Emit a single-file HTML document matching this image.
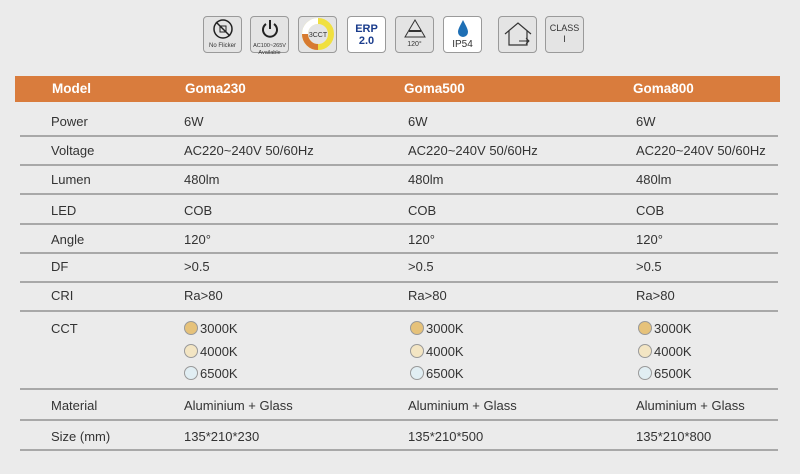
<!DOCTYPE html>
<html><head><meta charset="utf-8"><style>
*{margin:0;padding:0;box-sizing:border-box}
body{width:800px;height:474px;background:#ebebeb;font-family:"Liberation Sans",sans-serif;position:relative;overflow:hidden;color:#333}
.ic{position:absolute;top:16px;width:39px;height:37px;border:1.5px solid #9a9a9a;border-radius:4px;background:#e4e4e4;font-size:6px;text-align:center;color:#333}
.hdr{position:absolute;left:15px;top:76px;width:765px;height:26px;background:#d97c3d;color:#fff;font-weight:bold;font-size:13.5px}
.hdr span{position:absolute;top:5px}
.line{position:absolute;left:20px;width:758px;height:2px;background:#a8a8a8}
.t{position:absolute;font-size:13px;color:#333;white-space:nowrap}
.dot{display:inline-block;width:14px;height:14px;border-radius:50%;border:1px solid #999;vertical-align:-2px;margin-right:2px}
</style></head><body>
<div class="ic" style="left:203px"><svg width="36" height="26" viewBox="0 0 36 26"><circle cx="18" cy="12" r="9" fill="none" stroke="#222" stroke-width="1.5"/><line x1="11" y1="5" x2="25" y2="19" stroke="#222" stroke-width="1.5"/><path d="M15 9h6v6h-6z" fill="none" stroke="#222"/></svg><div style="margin-top:-2px">No Flicker</div></div>
<div class="ic" style="left:250px"><svg width="36" height="24" viewBox="0 0 36 24"><path d="M14 7a7 7 0 1 0 8 0" fill="none" stroke="#222" stroke-width="2"/><line x1="18" y1="3" x2="18" y2="12" stroke="#222" stroke-width="2"/></svg><div style="font-size:5.5px;line-height:7px">AC100~265V<br>Available</div></div>
<div class="ic" style="left:298px"><svg width="36" height="34" viewBox="0 0 36 34"><circle cx="18" cy="17" r="13" fill="none" stroke="#f0e040" stroke-width="6"/><path d="M5 17a13 13 0 0 0 13 13" fill="none" stroke="#d77a30" stroke-width="6"/><path d="M5 17a13 13 0 0 1 13-13" fill="none" stroke="#fff" stroke-width="6"/><text x="18" y="20" font-size="7" text-anchor="middle" fill="#333" font-family="Liberation Sans">3CCT</text></svg></div>
<div class="ic" style="left:347px;background:#fff"><div style="color:#1a3c8c;font-weight:bold;font-size:11px;line-height:12px;margin-top:6px">ERP<br>2.0</div></div>
<div class="ic" style="left:395px"><svg width="36" height="24" viewBox="0 0 36 24"><path d="M18 3L8 20h20z" fill="none" stroke="#333"/><path d="M12 14h12" stroke="#333" stroke-width="2"/></svg><div style="font-size:7px;margin-top:-2px">120°</div></div>
<div class="ic" style="left:443px;background:#fff"><svg width="36" height="22" viewBox="0 0 36 22"><path d="M18 3C15 9 13 12 13 15a5 5 0 0 0 10 0c0-3-2-6-5-12z" fill="#1e6fb5"/></svg><div style="font-size:10px;margin-top:-2px">IP54</div></div>
<div class="ic" style="left:498px"><svg width="36" height="34" viewBox="0 0 36 34"><path d="M5 17L18 6l13 11M9 14v14h18V14" fill="none" stroke="#333" stroke-width="1.2"/><path d="M19 24h10M26 21l3 3-3 3" fill="none" stroke="#333"/></svg></div>
<div class="ic" style="left:545px"><div style="font-size:9px;margin-top:6px;line-height:11px">CLASS<br>I</div></div>
<div class="hdr"><span style="left:37px">Model</span><span style="left:170px">Goma230</span><span style="left:389px">Goma500</span><span style="left:618px">Goma800</span></div>
<div class="line" style="top:135px"></div><div class="line" style="top:164px"></div><div class="line" style="top:193px"></div><div class="line" style="top:223px"></div><div class="line" style="top:252px"></div><div class="line" style="top:281px"></div><div class="line" style="top:310px"></div><div class="line" style="top:388px"></div><div class="line" style="top:419px"></div><div class="line" style="top:449px"></div>
<div class="t" style="left:51px;top:114px">Power</div><div class="t" style="left:184px;top:114px">6W</div><div class="t" style="left:408px;top:114px">6W</div><div class="t" style="left:636px;top:114px">6W</div>
<div class="t" style="left:51px;top:143px">Voltage</div><div class="t" style="left:184px;top:143px">AC220~240V 50/60Hz</div><div class="t" style="left:408px;top:143px">AC220~240V 50/60Hz</div><div class="t" style="left:636px;top:143px">AC220~240V 50/60Hz</div>
<div class="t" style="left:51px;top:172px">Lumen</div><div class="t" style="left:184px;top:172px">480lm</div><div class="t" style="left:408px;top:172px">480lm</div><div class="t" style="left:636px;top:172px">480lm</div>
<div class="t" style="left:51px;top:203px">LED</div><div class="t" style="left:184px;top:203px">COB</div><div class="t" style="left:408px;top:203px">COB</div><div class="t" style="left:636px;top:203px">COB</div>
<div class="t" style="left:51px;top:232px">Angle</div><div class="t" style="left:184px;top:232px">120°</div><div class="t" style="left:408px;top:232px">120°</div><div class="t" style="left:636px;top:232px">120°</div>
<div class="t" style="left:51px;top:259px">DF</div><div class="t" style="left:184px;top:259px">&gt;0.5</div><div class="t" style="left:408px;top:259px">&gt;0.5</div><div class="t" style="left:636px;top:259px">&gt;0.5</div>
<div class="t" style="left:51px;top:288px">CRI</div><div class="t" style="left:184px;top:288px">Ra&gt;80</div><div class="t" style="left:408px;top:288px">Ra&gt;80</div><div class="t" style="left:636px;top:288px">Ra&gt;80</div>
<div class="t" style="left:51px;top:321px">CCT</div>
<div class="t" style="left:184px;top:318px;line-height:22.5px"><span class="dot" style="background:#e6c27a"></span>3000K<br><span class="dot" style="background:#f3e5c3"></span>4000K<br><span class="dot" style="background:#e1eef3"></span>6500K</div>
<div class="t" style="left:410px;top:318px;line-height:22.5px"><span class="dot" style="background:#e6c27a"></span>3000K<br><span class="dot" style="background:#f3e5c3"></span>4000K<br><span class="dot" style="background:#e1eef3"></span>6500K</div>
<div class="t" style="left:638px;top:318px;line-height:22.5px"><span class="dot" style="background:#e6c27a"></span>3000K<br><span class="dot" style="background:#f3e5c3"></span>4000K<br><span class="dot" style="background:#e1eef3"></span>6500K</div>
<div class="t" style="left:51px;top:398px">Material</div><div class="t" style="left:184px;top:398px">Aluminium + Glass</div><div class="t" style="left:408px;top:398px">Aluminium + Glass</div><div class="t" style="left:636px;top:398px">Aluminium + Glass</div>
<div class="t" style="left:51px;top:429px">Size (mm)</div><div class="t" style="left:184px;top:429px">135*210*230</div><div class="t" style="left:408px;top:429px">135*210*500</div><div class="t" style="left:636px;top:429px">135*210*800</div>
</body></html>
